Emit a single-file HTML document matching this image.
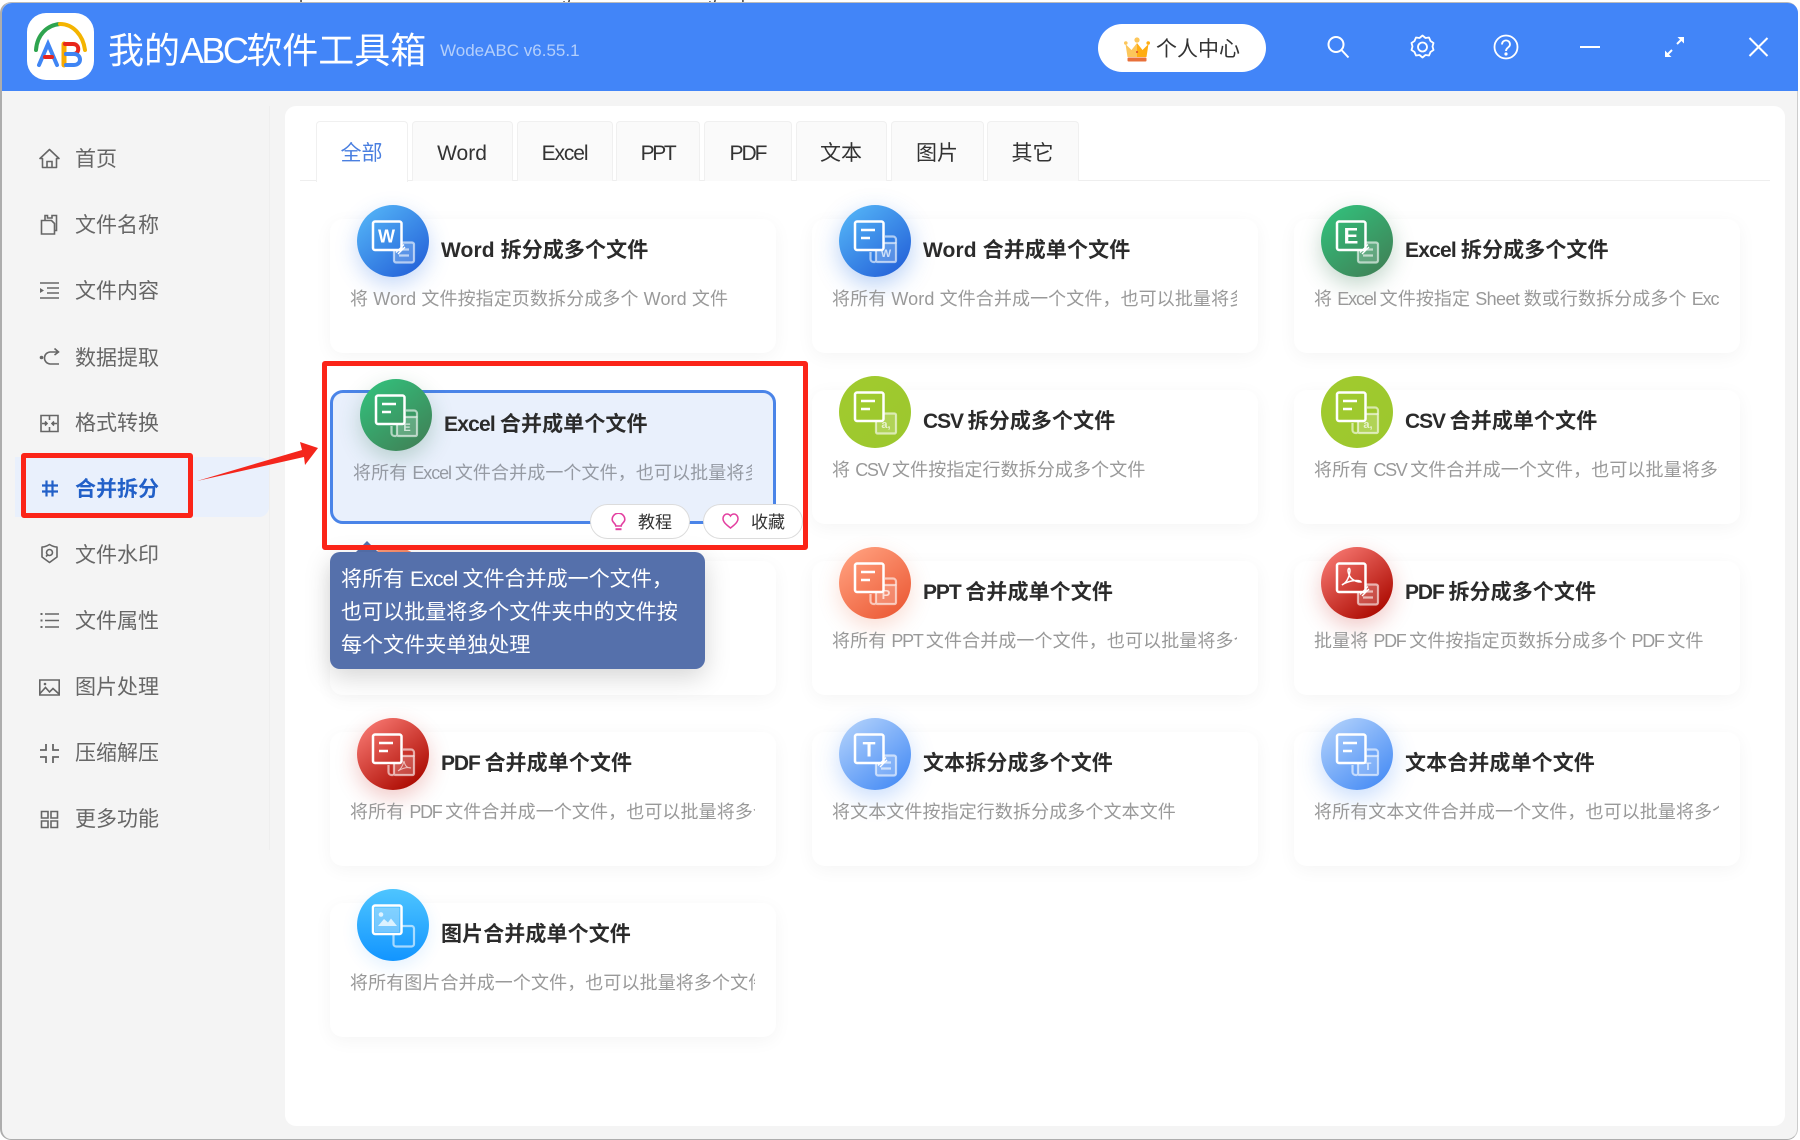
<!DOCTYPE html>
<html lang="zh-CN"><head><meta charset="utf-8"><title>我的ABC软件工具箱</title>
<style>
*{box-sizing:border-box;margin:0;padding:0}
html,body{width:1800px;height:1140px;overflow:hidden;background:#fff;font-family:"Liberation Sans","Noto Sans CJK SC",sans-serif}
.a{position:absolute}
#strip{left:280px;top:-12px;font-size:16px;line-height:16px;color:#333;white-space:nowrap;letter-spacing:.5px}
#win{position:absolute;left:0;top:2px;width:1798px;height:1138px;background:#f4f4f4;border-left:2px solid #adadad;border-bottom:1px solid #adadad;border-top:1px solid #bbb;border-right:1px solid #ccc;border-radius:11px;overflow:hidden}
#head{position:absolute;left:2px;top:3px;width:1796px;height:88px;background:#4285f8;border-radius:10px 10px 0 0}
.ht{left:108px;top:26px;height:50px;line-height:50px;font-size:36px;color:#fff;white-space:nowrap}
.sub{left:440px;top:36px;height:30px;line-height:30px;font-size:17px;color:#b4cffb;white-space:nowrap}
.btn{left:1098px;top:24px;width:168px;height:48px;background:#fff;border-radius:24px}
.btn span{position:absolute;left:58px;top:11px;line-height:30px;font-size:21px;color:#333;white-space:nowrap}
.side{left:269px;top:106px;width:1px;height:744px;background:#eee}
.panel{left:285px;top:106px;width:1500px;height:1020px;background:#fff;border-radius:11px}
.act{left:15px;top:457px;width:254px;height:60px;background:#e9f0fc;border-radius:0 10px 10px 0}
.n{left:75px;height:30px;line-height:30px;font-size:21px;color:#666;white-space:nowrap}
.n.on{color:#2260c8;font-weight:700}
.si{left:39px;width:21px;height:21px;fill:none;stroke:#666;stroke-width:1.6}
.tab{top:121px;height:60px;background:#fafafa;border:1px solid #f0f0f0;border-bottom:none;border-radius:4px 4px 0 0;font-size:21px;color:#333;line-height:64px;text-align:center;white-space:nowrap;padding-right:1px}
.tl{left:300px;top:180px;width:1470px;height:1px;background:#eee}
.card{position:absolute;width:446px;height:134px;background:#fff;border-radius:13px;box-shadow:0 4px 18px rgba(0,0,0,.045)}
.ic{position:absolute;left:27px;top:-14px;width:72px;height:72px;overflow:visible;border-radius:50%}
.t{position:absolute;left:111px;top:17px;line-height:30px;height:30px;font-size:21px;font-weight:700;color:#2b2b2b;white-space:nowrap;letter-spacing:.1px}
.d{position:absolute;left:20px;top:65px;width:405px;height:30px;line-height:30px;font-size:18px;color:#999;white-space:nowrap;overflow:hidden;letter-spacing:.1px}
.sel{background:#e9f0fc;border:3px solid #4a84e8;box-shadow:none}
.sel .d{width:399px;color:#959aa3}
.x{letter-spacing:-.8px}.c{letter-spacing:-1.1px}
.d .x{letter-spacing:-1.1px}.d .c{letter-spacing:-1.300px}
.sh{letter-spacing:-.6px}
.b{fill:none;stroke:#fff;stroke-opacity:.6;stroke-width:2.2}
.b2{fill:#fff;fill-opacity:.2;stroke:#fff;stroke-opacity:.6;stroke-width:2.2}
.f{stroke:#fff;stroke-width:2.5}
.fl{fill:none;stroke:#fff;stroke-width:2.5}
.l{font-family:"Liberation Sans",sans-serif;font-weight:700;fill:#fff;text-anchor:middle}
.lb{font-family:"Liberation Sans",sans-serif;font-weight:700;fill:#fff;fill-opacity:.7;text-anchor:middle;font-size:11px}
.pill{top:504px;height:35px;width:100px;background:#fff;border:1px solid #dcdcdc;border-radius:18px}
.pt{font-size:17px;line-height:24px;top:511px;color:#333;white-space:nowrap}
.tip{left:330px;top:552px;width:375px;height:117px;background:#5570ab;border-radius:10px;box-shadow:0 8px 26px rgba(0,0,0,.17);color:#fff;font-size:21px;line-height:33px;padding:11px 0 0 11px;white-space:nowrap;letter-spacing:.05px}
.tipa{left:355px;top:541px;width:24px;height:12px}
.red{border:5px solid #fb2418;border-radius:3px}
</style></head><body>
<div class="a" id="strip">https://docs.wodeabc.com/article/merge/excel-batch-merge-split-files-wodeabc-tool-online.html</div>
<div id="win"></div>
<div id="head"></div>

<svg class="a" width="0" height="0" style="left:0;top:0"><defs>
<linearGradient id="gw" gradientUnits="userSpaceOnUse" x1="10" y1="5" x2="62" y2="67"><stop offset="0" stop-color="#52b1f6"/><stop offset="1" stop-color="#2563d9"/></linearGradient>
<linearGradient id="ge" gradientUnits="userSpaceOnUse" x1="12" y1="5" x2="60" y2="67"><stop offset="0" stop-color="#33bd7a"/><stop offset="1" stop-color="#3f8458"/></linearGradient>
<linearGradient id="gc" gradientUnits="userSpaceOnUse" x1="0" y1="0" x2="72" y2="72"><stop offset="0" stop-color="#a1cb2f"/><stop offset="1" stop-color="#9cc72d"/></linearGradient>
<linearGradient id="gp" gradientUnits="userSpaceOnUse" x1="12" y1="5" x2="60" y2="67"><stop offset="0" stop-color="#ff9d7b"/><stop offset="1" stop-color="#ec5c38"/></linearGradient>
<linearGradient id="gd" gradientUnits="userSpaceOnUse" x1="12" y1="5" x2="60" y2="67"><stop offset="0" stop-color="#f4736c"/><stop offset="1" stop-color="#ab0900"/></linearGradient>
<linearGradient id="gt" gradientUnits="userSpaceOnUse" x1="12" y1="5" x2="60" y2="67"><stop offset="0" stop-color="#abcdfb"/><stop offset="1" stop-color="#4a8ef5"/></linearGradient>
<linearGradient id="gi" gradientUnits="userSpaceOnUse" x1="36" y1="0" x2="36" y2="72"><stop offset="0" stop-color="#4ec5ff"/><stop offset="1" stop-color="#1295ff"/></linearGradient>
</defs></svg>

<!-- logo -->
<div class="a" style="left:27px;top:13px;width:67px;height:67px;background:#fff;border-radius:19px"></div>
<svg class="a" style="left:27px;top:13px" width="67" height="67" viewBox="0 0 67 67" fill="none" stroke-linecap="round">
<path d="M9 37C10 22 20 12 33 11" stroke="#2ea44f" stroke-width="4"/>
<path d="M33 11C46 11 56 22 58 37" stroke="#f4b400" stroke-width="4"/>
<path d="M12 52L21 31L30 52" stroke="#3f85f4" stroke-width="4"/>
<path d="M18 44H25" stroke="#e8261c" stroke-width="4"/>
<path d="M37 31V52" stroke="#f9ab00" stroke-width="5"/>
<path d="M38 31H46C53 31 53 41 46 41H39" stroke="#e8261c" stroke-width="4"/>
<path d="M39 41H47C55 41 55 52 47 52H39" stroke="#3f85f4" stroke-width="4"/>
</svg>
<div class="a ht">我的<span style="letter-spacing:-2.6px">ABC</span>软件工具箱</div>
<div class="a sub">WodeABC v6.55.1</div>

<div class="a btn"><span>个人中心</span></div>
<svg class="a" style="left:1124px;top:37px" width="26" height="25" viewBox="0 0 26 25">
<path d="M13 6L7.5 13 1.5 7 3.5 20H13z" fill="#fcc65a"/><path d="M13 6l5.5 7 6-6L22.500 20H13z" fill="#ffad12"/>
<circle cx="13" cy="3" r="2.6" fill="#fcc65a"/><circle cx="1.800" cy="6" r="1.800" fill="#fcc65a"/><circle cx="24.200" cy="6" r="1.800" fill="#ffad12"/>
<rect x="3.500" y="20.500" width="19" height="4" rx="1" fill="#e8703a"/><circle cx="13" cy="15" r="1" fill="#d8452a"/>
</svg>

<!-- header tools -->
<svg class="a" style="left:1326px;top:35px" width="24" height="24" viewBox="0 0 24 24" fill="none" stroke="#fff" stroke-width="2"><circle cx="10" cy="9.500" r="7.500"/><path d="M15.500 15l7 7.500"/></svg>
<svg class="a" style="left:1410px;top:34px" width="25" height="26" viewBox="0 0 25 26" fill="none" stroke="#fff" stroke-width="1.800"><path d="M12.500 1.500l3 2.500 3.500-.5 1.500 3.500 3 2-1 3.500 1 3.500-3 2-1.500 3.500-3.500-.5-3 2.500-3-2.500-3.500.5-1.500-3.500-3-2 1-3.500-1-3.500 3-2L6 3.500 9.500 4z" stroke-linejoin="round"/><circle cx="12.500" cy="13" r="4.500"/></svg>
<svg class="a" style="left:1493px;top:34px" width="26" height="26" viewBox="0 0 26 26" fill="none" stroke="#fff" stroke-width="1.800"><circle cx="13" cy="13" r="11.500"/><path d="M9 10.500c0-5.500 8-5.500 8 0 0 3-4 3-4 6.500"/><circle cx="13" cy="20" r=".7" fill="#fff"/></svg>
<div class="a" style="left:1580px;top:46px;width:20px;height:2px;background:#fff"></div>
<svg class="a" style="left:1664px;top:36px" width="21" height="22" viewBox="0 0 21 22" fill="none" stroke="#fff" stroke-width="2"><path d="M2 20l6-6M13 8l6-6"/><path d="M1 14.500V21h6.500zM20 7.500V1h-6.500z" fill="#fff" stroke="none"/></svg>
<svg class="a" style="left:1748px;top:37px" width="21" height="20" viewBox="0 0 21 20" fill="none" stroke="#fff" stroke-width="2"><path d="M1.500 1l18 18M19.500 1l-18 18"/></svg>

<!-- sidebar -->
<div class="a side"></div>
<div class="a act"></div>
<div class="a n" style="top:145px">首页</div>
<div class="a n" style="top:211px">文件名称</div>
<div class="a n" style="top:277px">文件内容</div>
<div class="a n" style="top:344px">数据提取</div>
<div class="a n" style="top:409px">格式转换</div>
<div class="a n on" style="top:475px">合并拆分</div>
<div class="a n" style="top:541px">文件水印</div>
<div class="a n" style="top:607px">文件属性</div>
<div class="a n" style="top:673px">图片处理</div>
<div class="a n" style="top:739px">压缩解压</div>
<div class="a n" style="top:805px">更多功能</div>

<svg class="a si" style="top:148px" viewBox="0 0 21 21"><path d="M10.500 1.500L1 10.500h2.500v9h14v-9H20z" stroke-linejoin="round"/><path d="M8 19.500v-6h5v6"/></svg>
<svg class="a si" style="top:214px" viewBox="0 0 21 21"><path d="M2.500 6.500h10l3 3v10.500H2.500z"/><path d="M6 6.500V1.500h2.500V4h4.500V1.500h4.500V16.500h-2"/></svg>
<svg class="a si" style="top:280px" viewBox="0 0 21 21"><path d="M1 3h19M8 8h12M8 13h12M1 18h19"/><path d="M1 8l4 2.500-4 2.500z" fill="#666" stroke="none"/></svg>
<svg class="a si" style="top:347px" viewBox="0 0 21 21"><circle cx="2.500" cy="10.500" r="1.800" fill="#666" stroke="none"/><path d="M20 5H11a6 6 0 0 0-5.500 5.500A6 6 0 0 0 11 17h9M15.500 1.500L19.500 5l-4 3"/></svg>
<svg class="a si" style="top:413px" viewBox="0 0 21 21"><path d="M2 2.500h17v16H2z"/><path d="M10.500 2.500v4.500M10.500 14v4.500"/><path d="M3 10.500h4M6 8.500l2 2-2 2M18 10.500h-4M15 8.500l-2 2 2 2"/></svg>
<svg class="a si" style="top:478px;stroke:#2260c8;stroke-width:2.200" viewBox="0 0 21 21"><path d="M3 7.500h16M3 13.500h16M7.500 2.500v16M13.500 2.500v16"/></svg>
<svg class="a si" style="top:543px" viewBox="0 0 21 21"><path d="M10.500 1.500c2.500 1.500 5 2.500 7.500 2.500v10l-7.500 5.500L3 14V4c2.500 0 5-1 7.500-2.500z" stroke-linejoin="round"/><circle cx="10.500" cy="9.500" r="3"/><path d="M8.500 12l-1.500 1.500"/></svg>
<svg class="a si" style="top:610px" viewBox="0 0 21 21"><path d="M6 4h14M6 10.500h14M6 17h14"/><path d="M1.500 4h2M1.500 10.500h2M1.500 17h2" stroke-width="2"/></svg>
<svg class="a si" style="top:677px" viewBox="0 0 21 21"><path d="M.8 3h19.400v15H.8z"/><path d="M1 16.500l5.500-6 4 4.500 3.500-3.500 6 5.500"/><circle cx="6" cy="7" r="1.300" fill="#666" stroke="none"/></svg>
<svg class="a si" style="top:743px;stroke-width:1.800" viewBox="0 0 21 21"><path d="M1 7h6V1M14 1v6h6M1 14h6v6M14 20v-6h6"/></svg>
<svg class="a si" style="top:809px" viewBox="0 0 21 21"><path d="M2.500 2.500h6.500v6.500H2.500zM12 2.500h6.500v6.500H12zM2.500 12h6.500v6.500H2.500zM12 12h6.500v6.500H12z"/></svg>

<!-- main -->
<div class="a panel"></div>
<div class="a tl"></div>
<div class="a tab" style="left:316px;width:92px;background:#fff;color:#4a7fe0;height:61px">全部</div>
<div class="a tab" style="left:412px;width:101px">Word</div>
<div class="a tab" style="left:517px;width:96px"><span style="letter-spacing:-1.100px">Excel</span></div>
<div class="a tab" style="left:616px;width:84px"><span style="letter-spacing:-2.400px">PPT</span></div>
<div class="a tab" style="left:704px;width:88px"><span style="letter-spacing:-2px">PDF</span></div>
<div class="a tab" style="left:796px;width:91px">文本</div>
<div class="a tab" style="left:891px;width:93px">图片</div>
<div class="a tab" style="left:987px;width:92px">其它</div>

<!-- row 1 -->
<div class="card" style="left:330px;top:219px">
<svg class="ic" viewBox="0 0 72 72" style="box-shadow:0 8px 22px rgba(50,120,230,.28)"><circle cx="36" cy="36" r="36" fill="url(#gw)"/><rect class="b2" x="37" y="37.500" width="20" height="20" rx="2"/><path class="b" d="M42 44.500h10M42 50.500h10"/><rect class="f" x="16" y="16.500" width="28.500" height="28.500" rx="2" fill="url(#gw)"/><text class="l" x="29.500" y="37.500" font-size="18">W</text><path d="M39 47.500l8-8M41 49l7-7" stroke="#fff" stroke-width="1.300"/></svg>
<div class="t">Word 拆分成多个文件</div><div class="d">将 Word 文件按指定页数拆分成多个 Word 文件</div></div>

<div class="card" style="left:812px;top:219px">
<svg class="ic" viewBox="0 0 72 72" style="box-shadow:0 8px 24px rgba(50,120,230,.35)"><circle cx="36" cy="36" r="36" fill="url(#gw)"/><path class="b" d="M46 31.500h8a3 3 0 0 1 3 3v4M31.500 47v7a3 3 0 0 0 3 3h2"/><rect class="b2" x="37" y="38" width="20" height="19" rx="1.500"/><text class="lb" x="47" y="52">W</text><rect class="f" x="16" y="16.500" width="28.500" height="28.500" rx="2" fill="url(#gw)"/><path class="fl" d="M22 25h14M22 33h9"/></svg>
<div class="t">Word 合并成单个文件</div><div class="d">将所有 Word 文件合并成一个文件，也可以批量将多个文件夹中的文件按每个文件夹单独处理</div></div>

<div class="card" style="left:1294px;top:219px">
<svg class="ic" viewBox="0 0 72 72" style="box-shadow:0 8px 22px rgba(40,110,70,.28)"><circle cx="36" cy="36" r="36" fill="url(#ge)"/><rect class="b2" x="37" y="37.500" width="20" height="20" rx="2"/><path class="b" d="M42 44.500h10M42 50.500h10"/><rect class="f" x="16" y="16.500" width="28.500" height="28.500" rx="2" fill="url(#ge)"/><text class="l" x="30" y="38.500" font-size="22">E</text><path d="M39 47.500l8-8M41 49l7-7" stroke="#fff" stroke-width="1.300"/></svg>
<div class="t"><span class="x">Excel </span>拆分成多个文件</div><div class="d">将 <span class="x">Excel </span>文件按指定 <span class="sh">Sheet </span>数或行数拆分成多个 <span class="x">Excel </span>文件</div></div>

<!-- row 3 col 1 hidden card -->
<div class="card" style="left:330px;top:561px">
<svg class="ic" viewBox="0 0 72 72"><circle cx="36" cy="36" r="36" fill="url(#gp)"/></svg></div>

<!-- row 2 -->
<div class="card sel" style="left:330px;top:390px">
<svg class="ic" viewBox="0 0 72 72" style="box-shadow:0 8px 22px rgba(40,110,70,.25)"><circle cx="36" cy="36" r="36" fill="url(#ge)"/><path class="b" d="M46 31.500h8a3 3 0 0 1 3 3v4M31.500 47v7a3 3 0 0 0 3 3h2"/><rect class="b2" x="37" y="38" width="20" height="19" rx="1.500"/><text class="lb" x="47" y="52">E</text><rect class="f" x="16" y="16.500" width="28.500" height="28.500" rx="2" fill="url(#ge)"/><path class="fl" d="M22 25h14M22 33h9"/></svg>
<div class="t"><span class="x">Excel </span>合并成单个文件</div><div class="d">将所有 <span class="x">Excel </span>文件合并成一个文件，也可以批量将多个文件夹中的文件按每个文件夹单独处理</div></div>

<div class="card" style="left:812px;top:390px">
<svg class="ic" viewBox="0 0 72 72"><circle cx="36" cy="36" r="36" fill="url(#gc)"/><rect class="b2" x="37" y="37.500" width="20" height="20" rx="1.500"/><text class="lb" x="47" y="52">a,</text><rect class="f" x="16" y="16.500" width="28.500" height="28.500" rx="2" fill="url(#gc)"/><path class="fl" d="M22 25h14M22 33h9"/></svg>
<div class="t"><span class="c">CSV </span>拆分成多个文件</div><div class="d">将 <span class="c">CSV </span>文件按指定行数拆分成多个文件</div></div>

<div class="card" style="left:1294px;top:390px">
<svg class="ic" viewBox="0 0 72 72"><circle cx="36" cy="36" r="36" fill="url(#gc)"/><path class="b" d="M46 31.500h8a3 3 0 0 1 3 3v4M31.500 47v7a3 3 0 0 0 3 3h2"/><rect class="b2" x="37" y="38" width="20" height="19" rx="1.500"/><text class="lb" x="47" y="52">a,</text><rect class="f" x="16" y="16.500" width="28.500" height="28.500" rx="2" fill="url(#gc)"/><path class="fl" d="M22 25h14M22 33h9"/></svg>
<div class="t"><span class="c">CSV </span>合并成单个文件</div><div class="d">将所有 <span class="c">CSV </span>文件合并成一个文件，也可以批量将多个文件夹中的文件按每个文件夹单独处理</div></div>

<!-- row 3 -->
<div class="card" style="left:812px;top:561px">
<svg class="ic" viewBox="0 0 72 72" style="box-shadow:0 8px 22px rgba(230,100,60,.22)"><circle cx="36" cy="36" r="36" fill="url(#gp)"/><path class="b" d="M46 31.500h8a3 3 0 0 1 3 3v4M31.500 47v7a3 3 0 0 0 3 3h2"/><rect class="b2" x="37" y="38" width="20" height="19" rx="1.500"/><text class="lb" x="47" y="52" style="font-size:13px">P</text><rect class="f" x="16" y="16.500" width="28.500" height="28.500" rx="2" fill="url(#gp)"/><path class="fl" d="M22 25h14M22 33h9"/></svg>
<div class="t"><span class="c">PPT </span>合并成单个文件</div><div class="d">将所有 <span class="c">PPT </span>文件合并成一个文件，也可以批量将多个文件夹中的文件按每个文件夹单独处理</div></div>

<div class="card" style="left:1294px;top:561px">
<svg class="ic" viewBox="0 0 72 72" style="box-shadow:0 8px 22px rgba(200,40,30,.25)"><circle cx="36" cy="36" r="36" fill="url(#gd)"/><rect class="b2" x="37" y="37.500" width="20" height="20" rx="2"/><path class="b" d="M42 44.500h10M42 50.500h10"/><rect class="f" x="16" y="16.500" width="28.500" height="28.500" rx="2" fill="url(#gd)"/><path d="M21 38c4-2 7-7 8-14 0-4-2-3-2 0 1 7 6 11 13 11 0-2-8-2-13 0-3 1-5 2-6 3z" fill="none" stroke="#fff" stroke-width="1.500"/><path d="M39 47.500l8-8M41 49l7-7" stroke="#fff" stroke-width="1.300"/></svg>
<div class="t"><span class="c">PDF </span>拆分成多个文件</div><div class="d">批量将 <span class="c">PDF </span>文件按指定页数拆分成多个 <span class="c">PDF </span>文件</div></div>

<!-- row 4 -->
<div class="card" style="left:330px;top:732px">
<svg class="ic" viewBox="0 0 72 72" style="box-shadow:0 8px 22px rgba(200,40,30,.25)"><circle cx="36" cy="36" r="36" fill="url(#gd)"/><path class="b" d="M46 31.500h8a3 3 0 0 1 3 3v4M31.500 47v7a3 3 0 0 0 3 3h2"/><rect class="b2" x="37" y="38" width="20" height="19" rx="1.500"/><path d="M41 53c3-2 5-6 6-10 1 5 3 7 7 7-3-1-8 0-13 3z" fill="none" stroke="#fff" stroke-opacity=".65" stroke-width="1"/><rect class="f" x="16" y="16.500" width="28.500" height="28.500" rx="2" fill="url(#gd)"/><path class="fl" d="M22 25h14M22 33h9"/></svg>
<div class="t"><span class="c">PDF </span>合并成单个文件</div><div class="d">将所有 <span class="c">PDF </span>文件合并成一个文件，也可以批量将多个文件夹中的文件按每个文件夹单独处理</div></div>

<div class="card" style="left:812px;top:732px">
<svg class="ic" viewBox="0 0 72 72" style="box-shadow:0 8px 24px rgba(70,140,245,.3)"><circle cx="36" cy="36" r="36" fill="url(#gt)"/><rect class="b2" x="37" y="37.500" width="20" height="20" rx="2"/><path class="b" d="M42 44.500h10M42 50.500h10"/><rect class="f" x="16" y="16.500" width="28.500" height="28.500" rx="2" fill="url(#gt)"/><text class="l" x="30" y="38.500" font-size="21">T</text><path d="M39 47.500l8-8M41 49l7-7" stroke="#fff" stroke-width="1.300"/></svg>
<div class="t">文本拆分成多个文件</div><div class="d">将文本文件按指定行数拆分成多个文本文件</div></div>

<div class="card" style="left:1294px;top:732px">
<svg class="ic" viewBox="0 0 72 72" style="box-shadow:0 8px 24px rgba(70,140,245,.3)"><circle cx="36" cy="36" r="36" fill="url(#gt)"/><path class="b" d="M46 31.500h8a3 3 0 0 1 3 3v4M31.500 47v7a3 3 0 0 0 3 3h2"/><rect class="b2" x="37" y="38" width="20" height="19" rx="1.500"/><text class="lb" x="47" y="52">T</text><rect class="f" x="16" y="16.500" width="28.500" height="28.500" rx="2" fill="url(#gt)"/><path class="fl" d="M22 25h14M22 33h9"/></svg>
<div class="t">文本合并成单个文件</div><div class="d">将所有文本文件合并成一个文件，也可以批量将多个文件夹中的文件按每个文件夹单独处理</div></div>

<!-- row 5 -->
<div class="card" style="left:330px;top:903px">
<svg class="ic" viewBox="0 0 72 72" style="box-shadow:0 6px 16px rgba(30,150,255,.12)"><circle cx="36" cy="36" r="36" fill="url(#gi)"/><rect class="b" x="36.500" y="37" width="20.500" height="20.500" rx="2.500"/><rect class="f" x="16" y="16.500" width="28.500" height="28.500" rx="2" fill="url(#gi)"/><rect x="18" y="18.500" width="24.500" height="24.500" fill="#fff" fill-opacity=".35"/><path d="M21 37l6-7 4 3.500 3-4 6 7.500z" fill="#fff" fill-opacity=".75"/><circle cx="24" cy="25.500" r="2.300" fill="#fff" fill-opacity=".75"/></svg>
<div class="t">图片合并成单个文件</div><div class="d">将所有图片合并成一个文件，也可以批量将多个文件夹中的文件按每个文件夹单独处理</div></div>

<!-- selected overlays -->
<div class="a pill" style="left:590px"></div>
<div class="a pill" style="left:703px"></div>
<svg class="a" style="left:611px;top:513px" width="15" height="18" viewBox="0 0 15 18" fill="none" stroke="#e33fa0" stroke-width="1.600"><path d="M4.800 13C4.800 10.500 1.200 9.500 1.200 6.500a6.300 6.300 0 0 1 12.600 0c0 3-3.600 4-3.600 6.500z"/><path d="M4.500 16.200h6" stroke-width="2"/></svg>
<div class="a pt" style="left:638px">教程</div>
<svg class="a" style="left:722px;top:513px" width="17" height="16" viewBox="0 0 17 16" fill="none" stroke="#e33fa0" stroke-width="1.500"><path d="M8.500 15C4 11.500 1 9 1 5.500 1 3 3 1 5 1c1.500 0 2.700.8 3.500 2C9.300 1.800 10.500 1 12 1c2 0 4 2 4 4.500 0 3.500-3 6-7.500 9.500z"/></svg>
<div class="a pt" style="left:751px">收藏</div>

<svg class="a tipa" viewBox="0 0 24 12"><path d="M12 0L24 12H0z" fill="#5570ab"/></svg>
<div class="a tip">将所有 <span class="x">Excel </span>文件合并成一个文件，<br>也可以批量将多个文件夹中的文件按<br>每个文件夹单独处理</div>

<!-- annotations -->
<div class="a red" style="left:322px;top:361px;width:486px;height:189px"></div>
<div class="a red" style="left:21px;top:453px;width:172px;height:65px"></div>
<svg class="a" style="left:190px;top:435px" width="135" height="55" viewBox="190 435 135 55"><path d="M197 481L302 450 300 442 318 448 305 465 304 457z" fill="#f4261c"/></svg>
</body></html>
